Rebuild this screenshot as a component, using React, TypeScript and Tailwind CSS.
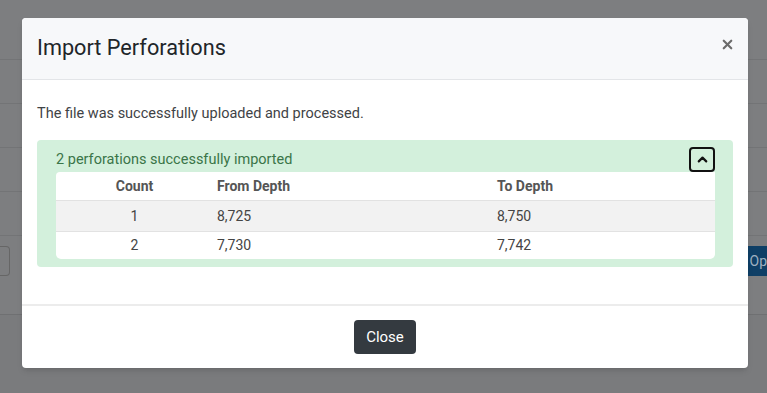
import { ChevronUp, X } from "lucide-react";

const rows = [
  { count: 1, from: "8,725", to: "8,750" },
  { count: 2, from: "7,730", to: "7,742" },
];

function PageBehind() {
  return (
    <div className="flex flex-col bg-[#7d7e80]">
      <div className="h-[60px] border-b border-[#737476]" />
      <div className="h-[44px] border-b border-[#737476]" />
      <div className="h-[44px] border-b border-[#737476]" />
      <div className="h-[44px] border-b border-[#737476]" />
      <div className="h-[44px] border-b border-[#737476]" />
      <div className="flex h-[79px] items-start justify-between border-b border-[#6f7072] pt-[10px]">
        <div className="h-[30px] w-[10px] rounded-r border border-[#666] border-l-0" />
        <div className="flex h-[30px] items-center bg-[#0f3f66] pl-[3px] text-[14px] text-[#9fb0c0]">
          Op
        </div>
      </div>
      <div className="h-[78px] bg-[#7a7b7d]" />
    </div>
  );
}

export default function App() {
  return (
    <div
      className="relative h-[393px] w-[767px] overflow-hidden"
      style={{ fontFamily: "Roboto, 'Noto Sans', sans-serif" }}
    >
      <PageBehind />
      <div className="absolute left-[22px] top-[18px] flex w-[726px] flex-col overflow-hidden rounded-[4px] bg-white shadow-md">
        <div className="flex h-[62px] items-center justify-between border-b border-[#e3e5e8] bg-[#f7f8fa] pl-[15px] pr-[13px]">
          <h5 className="text-[21.7px] text-[#212529]">Import Perforations</h5>
          <X className="mb-[8px] h-[15px] w-[15px] text-[#6b6b6b]" strokeWidth={3.5} />
        </div>
        <div className="px-[15px] pb-[37px] pt-[24px]">
          <p className="text-[14.5px] leading-[20px] text-[#3f4346]">
            The file was successfully uploaded and processed.
          </p>
          <div className="mt-[16px] rounded-[4px] bg-[#d3f0dc] pb-[8px] pl-[19px] pr-[18px] pt-[8px]">
            <div className="flex items-start justify-between">
              <span className="pb-[2px] pt-[2px] text-[14.5px] leading-[20px] text-[#3a7548]">
                2 perforations successfully imported
              </span>
              <button className="-mb-[2px] -mt-[1px] flex h-[25px] w-[26px] items-center justify-center rounded-[4px] border-2 border-[#111] bg-transparent">
                <ChevronUp className="h-[15px] w-[15px] text-[#111]" strokeWidth={3.5} />
              </button>
            </div>
            <div className="overflow-hidden rounded-b-[5px] rounded-tl-[4px] bg-white text-[14px] text-[#444]">
              <div className="grid h-[28px] grid-cols-[161px_280px_1fr] items-center font-bold text-[#555]">
                <div className="pr-[4px] text-center">Count</div>
                <div>From Depth</div>
                <div>To Depth</div>
              </div>
              {rows.map((r, i) => (
                <div
                  key={r.count}
                  className={
                    i % 2 === 0
                      ? "grid h-[31px] grid-cols-[161px_280px_1fr] items-center border-t border-[#e2e2e2] bg-[#f2f2f2]"
                      : "grid h-[28px] grid-cols-[161px_280px_1fr] items-center border-t border-[#e2e2e2]"
                  }
                >
                  <div className="pr-[4px] text-center">{r.count}</div>
                  <div>{r.from}</div>
                  <div>{r.to}</div>
                </div>
              ))}
            </div>
          </div>
        </div>
        <div className="flex h-[64px] items-center justify-center border-t-2 border-[#ececec]">
          <button className="h-[34px] rounded-[4px] bg-[#343a40] px-[12px] text-[15px] text-white">
            Close
          </button>
        </div>
      </div>
    </div>
  );
}
